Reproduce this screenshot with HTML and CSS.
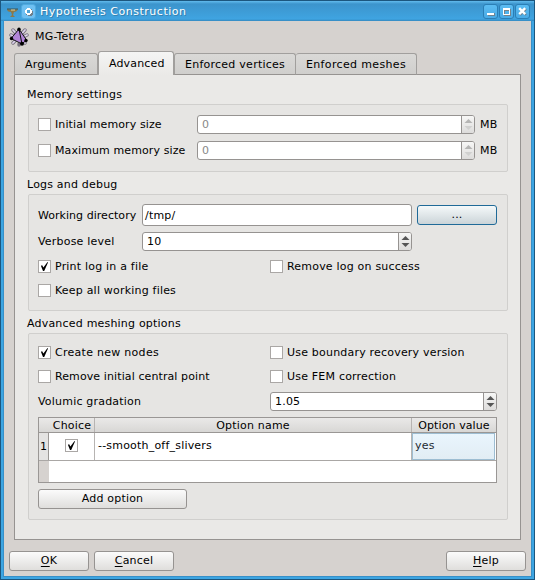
FILE: index.html
```html
<!DOCTYPE html>
<html lang="en">
<head>
<meta charset="utf-8">
<title>Hypothesis Construction</title>
<link rel="stylesheet" href="styles.css">
</head>
<body>
<div class="window">
  <header class="titlebar">
    <svg class="app-icon" width="13" height="11" viewBox="0 0 13 11"><path d="M1 2 Q6 3 12 2 Q11 5 8 5 L7 8 L9 10 H4 L6 8 L5 5 Q1 5 1 2Z" fill="#8c7948"/><path d="M1 2h11" stroke="#39545b"/><path d="M5 3h4" stroke="#e0cf93"/></svg>
    <span class="sys-btn"><svg width="9" height="9" viewBox="0 0 9 9"><path d="M4 2h4v2h1v4H8v1H4V8H2V4h2z" fill="#6d7f8c"/><path d="M3 1h3v1h1v1h1v3H7v1H6v1H3V7H2V6H1V3h1V2h1z" fill="#fff"/><path d="M3 3h3v3H3z" fill="#4ea5d8"/></svg></span>
    <span class="title">Hypothesis Construction</span>
    <span class="win-btn"><svg width="9" height="9" viewBox="0 0 9 9"><path d="M2 6h7v3H2z" fill="#6c8494"/><path d="M1 6h7v2H1z" fill="#fff"/></svg></span>
    <span class="win-btn"><svg width="9" height="9" viewBox="0 0 9 9"><path d="M2 2h7v7H2zM3 4v3h4V4z" fill="#7b8287" fill-rule="evenodd"/><path d="M1 1h7v7H1zM2 3v4h5V3z" fill="#fff" fill-rule="evenodd"/></svg></span>
    <span class="win-btn"><svg width="9" height="9" viewBox="0 0 9 9"><path d="M2 2l6 6M8 2L2 8" stroke="#6c8494" stroke-width="2.4"/><path d="M1.2 1.2l6 6M7.2 1.2l-6 6" stroke="#fff" stroke-width="2.4"/></svg></span>
  </header>
  <main class="dialog">
    <div class="heading">
      <svg width="20" height="20" viewBox="0 0 20 20"><g stroke="#77717f" stroke-width="3.4" stroke-linecap="round"><path d="M4 3l12 13M16 3L4 16M2 8l2 1M18 8l-2 1M10 17v1"/></g><g stroke="#dcd3ea" stroke-width="1.8" stroke-linecap="round"><path d="M4 3l12 13M16 3L4 16M2 8l2 1M18 8l-2 1"/></g><path d="M10 2L2 11.5l11 5.5 4.5-4z" fill="#b184d8" stroke="#111"/><path d="M10 2l3 15" stroke="#111"/><g fill="#000"><circle cx="10" cy="2.2" r="1.7"/><circle cx="2.5" cy="11.5" r="1.7"/><circle cx="13" cy="16.8" r="2"/><circle cx="17" cy="13.5" r="1.7"/></g></svg>
      <span>MG-Tetra</span>
    </div>
    <nav class="tabs">
      <div class="tab tab-args">Arguments</div>
      <div class="tab tab-adv">Advanced</div>
      <div class="tab tab-vert">Enforced vertices</div>
      <div class="tab tab-mesh">Enforced meshes</div>
    </nav>
    <section class="pane">
      <h2>Memory settings</h2>
      <div class="group memory">
        <div class="row"><label class="check"><i class="box"></i><span class="tight">Initial memory size</span></label><div class="spin off"><span>0</span><i class="arrows"><svg width="9" height="13"><path d="M0.5 5L4.5 1l4 4z"/><path class="down" d="M0.5 8l4 4 4-4z"/></svg></i></div><span class="unit">MB</span></div>
        <div class="row"><label class="check"><i class="box"></i><span class="tight">Maximum memory size</span></label><div class="spin off"><span>0</span><i class="arrows"><svg width="9" height="13"><path d="M0.5 5L4.5 1l4 4z"/><path class="down" d="M0.5 8l4 4 4-4z"/></svg></i></div><span class="unit">MB</span></div>
      </div>
      <h2>Logs and debug</h2>
      <div class="group logs">
        <div class="row dir"><span class="label">Working directory</span><div class="line">/tmp/</div><div class="btn browse">...</div></div>
        <div class="row verbose"><span class="label">Verbose level</span><div class="spin"><span>10</span><i class="arrows"><svg width="9" height="13"><path d="M0.5 5L4.5 1l4 4z"/><path d="M0.5 8l4 4 4-4z"/></svg></i></div></div>
        <div class="checks">
          <label class="check"><i class="box"><svg width="11" height="11"><path d="M2 5l1-1 1.4 2.6L8.5 1 9 1.5 5.2 10H4z"/></svg></i><span>Print log in a file</span></label>
          <label class="check"><i class="box"></i><span>Remove log on success</span></label>
          <label class="check"><i class="box"></i><span>Keep all working files</span></label>
        </div>
      </div>
      <h2>Advanced meshing options</h2>
      <div class="group meshing">
        <div class="checks">
          <label class="check"><i class="box"><svg width="11" height="11"><path d="M2 5l1-1 1.4 2.6L8.5 1 9 1.5 5.2 10H4z"/></svg></i><span class="wide">Create new nodes</span></label>
          <label class="check"><i class="box"></i><span>Use boundary recovery version</span></label>
          <label class="check"><i class="box"></i><span class="tight">Remove initial central point</span></label>
          <label class="check"><i class="box"></i><span>Use FEM correction</span></label>
        </div>
        <div class="row volumic"><span class="label">Volumic gradation</span><div class="spin"><span>1.05</span><i class="arrows"><svg width="9" height="13"><path d="M0.5 5L4.5 1l4 4z"/><path d="M0.5 8l4 4 4-4z"/></svg></i></div></div>
        <div class="table">
          <div class="thead"><span class="c1">Choice</span><span class="c2">Option name</span><span class="c3">Option value</span></div>
          <div class="tr"><span class="num">1</span><span class="choice"><i class="box"><svg width="11" height="11"><path d="M2 5l1-1 1.4 2.6L8.5 1 9 1.5 5.2 10H4z"/></svg></i></span><span class="name">--smooth_off_slivers</span><span class="value">yes</span></div>
          <div class="rest"></div>
        </div>
        <div class="btn add">Add option</div>
      </div>
    </section>
    <footer>
      <div class="btn"><span><u>O</u>K</span></div>
      <div class="btn"><span><u>C</u>ancel</span></div>
      <div class="btn help"><span><u>H</u>elp</span></div>
    </footer>
  </main>
</div>
</body>
</html>
```

FILE: styles.css
```css
* { box-sizing: border-box; }
body { margin: 0; font: 11px/14px "DejaVu Sans", sans-serif; color: #000; letter-spacing: 0.2px; }
svg { display: block; flex: none; }
.tight { letter-spacing: 0.1px; }
.wide { letter-spacing: 0.28px; }
.window { width: 535px; height: 580px; padding: 0 3px 3px; background: #3da5e2; border: 1px solid #1c567e; }
.titlebar { height: 20px; margin: 0 -3px; padding: 1px 4px 0 6px; display: flex; align-items: center; background: linear-gradient(#62bbed 0, #3c94cc 3px, #3fa4e1 18px, #2f86bd 20px); }
.app-icon { margin-top: 2px; margin-left: -1px; }
.sys-btn, .win-btn { width: 15px; height: 15px; border: 1px solid #2b7fb6; border-radius: 3px; background: linear-gradient(#5bbcf2, #4aabe6); display: flex; align-items: center; justify-content: center; flex: none; }
.sys-btn { margin-left: 2px; background: #6fc0f2; border-color: #4fabe0; }
.win-btn { margin-left: 1px; }
.title { color: #fff; margin-left: 4px; padding-top: 1px; flex: 1; letter-spacing: 0.52px; text-shadow: 1px 1px 0 #3580ad; }
.dialog { height: 555px; background: #d6d2cf; padding: 0 9px; overflow: hidden; box-shadow: 0 0 0 1px #3890c8; }
.heading { height: 32px; display: flex; align-items: center; padding-top: 2px; margin: -1px 0 0 -4px; gap: 6px; }
.tabs { display: flex; height: 23px; margin-left: 1px; align-items: flex-end; position: relative; z-index: 1; margin-bottom: -1px; }
.tab { height: 22px; border: 1px solid #a19f9d; border-bottom-color: #969391; background: linear-gradient(#dad9d7, #d0cfcd); border-radius: 3px 3px 0 0; padding: 4px 0 0 10px; letter-spacing: 0.15px; }
.tab-args { width: 84px; }
.tab-adv { width: 76px; height: 24px; padding-top: 5px; background: linear-gradient(#f5f5f4, #eae9e7); border-bottom: 0; }
.tab-vert { width: 122px; letter-spacing: 0.25px; }
.tab-mesh { width: 121px; letter-spacing: 0.35px; border-left: 0; }
.pane { height: 466px; margin: 0 1px; padding: 13px 12px 0; border: 1px solid #969391; background: #eae9e7; }
h2 { font-size: 11px; font-weight: normal; line-height: 14px; margin: 0 0 2px; }
.group { width: 480px; margin-left: 1px; border: 1px solid #d0cfcd; border-radius: 2px; background: #e6e5e3; padding: 0 9px; }
.memory { height: 68px; padding-top: 10px; margin-bottom: 6px; }
.row { display: flex; align-items: center; }
.memory .row { height: 19px; margin-bottom: 7px; }
.memory .check { width: 159px; }
.check { display: flex; align-items: center; gap: 4px; }
.box { width: 13px; height: 13px; border: 1px solid #aaa7a5; background: #fff; flex: none; }
.spin { height: 19px; border: 1px solid #969391; border-radius: 3px; background: #fff; display: flex; align-items: center; justify-content: space-between; padding-left: 4px; overflow: hidden; }
.memory .spin { width: 278px; }
.off { color: #888; }
.arrows { width: 13px; height: 17px; border-left: 1px solid #969391; background: linear-gradient(#f7f7f6, #dddcdb); display: flex; align-items: center; justify-content: center; fill: #555; }
.off .arrows { fill: #b5b5b4; }
.off .down { fill: #d0d0cf; }
.unit { margin-left: 5px; }
.logs { height: 117px; padding-top: 9px; margin-bottom: 6px; }
.label { width: 104px; }
.dir { height: 22px; margin-bottom: 6px; }
.dir .label { letter-spacing: 0.04px; padding-top: 1px; }
.line { width: 270px; height: 22px; border: 1px solid #969391; border-radius: 3px; background: #fff; padding: 4px 2px; }
.btn { height: 20px; border: 1px solid #969391; border-radius: 3px; background: linear-gradient(#fbfbfb, #dfdedc); text-align: center; line-height: 18px; }
.browse { width: 80px; margin-left: 5px; border-color: #206a98; background: linear-gradient(#f5f9fa, #cbd4d8); }
.verbose .spin { width: 270px; }
.checks { display: grid; grid-template-columns: 232px 1fr; grid-auto-rows: 24px; }
.checks .check { padding-bottom: 1px; }
.logs .checks { margin-top: 4px; }
.meshing { height: 187px; padding-top: 7px; }
.meshing .checks { margin-bottom: 3px; }
.volumic .label { width: 232px; }
.volumic .spin { width: 227px; }
.volumic { height: 19px; }
.table { width: 459px; height: 66px; margin-top: 6px; border: 1px solid #9a9795; background: #fff; }
.thead { display: flex; height: 15px; border-bottom: 1px solid #9a9795; background: linear-gradient(#eae9e8, #d8d7d5); text-align: center; line-height: 15px; }
.c1 { width: 56px; padding-left: 11px; border-right: 1px solid #b7b4b2; }
.c2 { width: 317px; border-right: 1px solid #b7b4b2; }
.c3 { flex: 1; letter-spacing: 0.1px; }
.tr { display: flex; height: 28px; line-height: 26px; border-bottom: 1px solid #aaa7a5; }
.num { width: 10px; border-right: 1px solid #9a9795; background: #e4e3e2; text-align: center; line-height: 28px; }
.choice { width: 46px; border-right: 1px solid #b7b4b2; display: flex; align-items: center; justify-content: center; padding-bottom: 2px; }
.name { width: 317px; border-right: 1px solid #b7b4b2; padding-left: 3px; }
.value { width: 83px; height: 27px; border: 1px solid #9dbdd2; background: linear-gradient(#e9f5fd, #e2edf4); padding-left: 2px; line-height: 24px; color: #1d2a33; }
.rest { width: 10px; height: 21px; background: #d6d2cf; }
.add { width: 149px; margin-top: 6px; }
footer { display: flex; margin: 11px -4px 0; gap: 5px; }
footer .btn { width: 80px; }
footer .help { margin-left: auto; }
u { text-underline-offset: 2px; }
```
